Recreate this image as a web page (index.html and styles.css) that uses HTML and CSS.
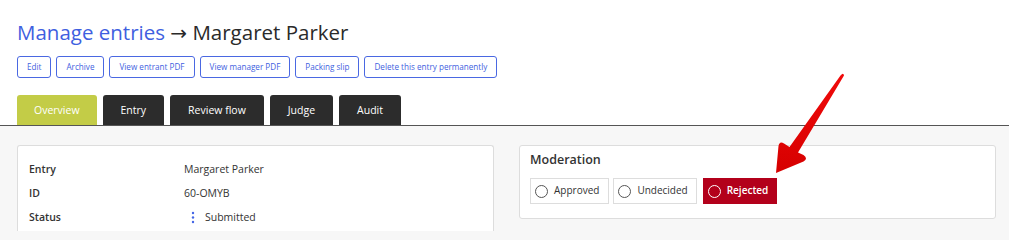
FILE: index.html
```html
<!DOCTYPE html>
<html>
<head>
<meta charset="utf-8">
<link rel="stylesheet" href="styles.css">
</head>
<body>
<div class="top">
  <h1 class="title"><span class="crumb">Manage entries</span> <span class="sep">→</span> Margaret Parker</h1>
  <div class="actions">
    <a class="btn">Edit</a>
    <a class="btn">Archive</a>
    <a class="btn">View entrant PDF</a>
    <a class="btn">View manager PDF</a>
    <a class="btn">Packing slip</a>
    <a class="btn">Delete this entry permanently</a>
  </div>
  <div class="tabs">
    <div class="tab active">Overview</div>
    <div class="tab">Entry</div>
    <div class="tab">Review flow</div>
    <div class="tab">Judge</div>
    <div class="tab">Audit</div>
  </div>
</div>
<div class="content">
  <div class="card info">
    <div class="row"><div class="label">Entry</div><div class="value">Margaret Parker</div></div>
    <div class="row"><div class="label">ID</div><div class="value">60-OMYB</div></div>
    <div class="row"><div class="label">Status</div><div class="value status"><svg class="dots" width="4" height="13" viewBox="0 0 4 13"><circle cx="2" cy="2" r="1.2"/><circle cx="2" cy="6.5" r="1.2"/><circle cx="2" cy="11" r="1.2"/></svg><span>Submitted</span></div></div>
  </div>
  <div class="card moderation">
    <div class="mod-title">Moderation</div>
    <div class="options">
      <div class="opt first"><span class="radio"></span><span class="opt-text">Approved</span></div>
      <div class="opt"><span class="radio"></span><span class="opt-text">Undecided</span></div>
      <div class="opt selected"><span class="radio"></span><span class="opt-text">Rejected</span></div>
    </div>
  </div>
</div>
<svg class="annot" width="1009" height="231" viewBox="0 0 1009 231">
  <defs>
    <linearGradient id="rg" x1="0" y1="0" x2="0" y2="1">
      <stop offset="0" stop-color="#f00a0a"/>
      <stop offset="1" stop-color="#d60000"/>
    </linearGradient>
  </defs>
  <path d="M776,173 L778.5,146 Q779.5,140.5 784,143.5 L789.5,147 L840.5,75.5 Q843.5,72 844,75.5 L798,152.5 L803.5,155 Q808.5,158.5 803.5,161.5 Z" fill="url(#rg)"/>
</svg>
</body>
</html>
```

FILE: styles.css
```css
html, body {
  margin: 0;
  padding: 0;
  overflow: hidden;
}
body {
  font-family: "Open Sans", "Liberation Sans", sans-serif;
  color: #333;
  background: #f7f7f7;
  width: 1009px;
  height: 231px;
  position: relative;
}
.top {
  background: #fff;
  padding: 19px 0 0 17px;
  border-bottom: 1px solid #555;
}
.title {
  margin: 0;
  font-size: 20.5px;
  line-height: 26px;
  font-weight: 400;
  color: #2a2a2a;
}
.crumb {
  color: #3f5fe0;
}
.sep {
  font-family: "DejaVu Sans", sans-serif;
  font-size: 20px;
}
.actions {
  display: flex;
  gap: 5px;
  margin-top: 10px;
}
.btn {
  display: block;
  height: 20px;
  line-height: 20px;
  padding: 0 9px;
  border: 1px solid #4a68e2;
  border-radius: 3px;
  color: #3f5fe0;
  font-size: 8.15px;
}
.tabs {
  display: flex;
  gap: 6px;
  margin-top: 17px;
}
.tab {
  height: 30px;
  line-height: 30px;
  padding: 0 18px;
  background: #2c2c2c;
  color: #fff;
  font-size: 10.5px;
  border-radius: 3px 3px 0 0;
}
.tab.active {
  background: #c3cc47;
  padding: 0 17px;
}
.content {
  display: flex;
  gap: 25px;
  padding: 19px 0 0 17px;
}
.card {
  background: #fff;
  border: 1px solid #ddd;
  border-radius: 3px;
  box-sizing: border-box;
  width: 477px;
}
.info {
  padding: 11px 11px 0;
  height: 86px;
  border-bottom: 0;
  border-radius: 3px 3px 0 0;
}
.row {
  display: flex;
  height: 24px;
  line-height: 24px;
  font-size: 10.5px;
}
.label {
  width: 155px;
  font-weight: 600;
  color: #333;
}
.value {
  color: #333;
}
.status {
  display: flex;
  align-items: center;
  padding-left: 7px;
}
.dots {
  fill: #4466e6;
  margin-right: 10px;
}
.moderation {
  padding: 7px 10px 14px;
  height: 74px;
}
.mod-title {
  font-size: 12.5px;
  font-weight: 600;
  line-height: 14px;
  color: #333;
  margin-bottom: 11px;
}
.options {
  display: flex;
}
.opt {
  display: flex;
  align-items: center;
  box-sizing: border-box;
  height: 26px;
  padding: 0 8px 0 4px;
  border: 1px solid #ddd;
  font-size: 10px;
  color: #333;
  margin-right: 3px;
}
.opt.first {
  margin-right: 4px;
  padding-right: 9px;
}
.opt.selected {
  background: #b3001b;
  border-color: #b3001b;
  color: #fff;
  font-weight: 600;
  margin-left: 3px;
}
.radio {
  width: 11px;
  height: 11px;
  border: 1px solid #555;
  border-radius: 50%;
  margin-right: 6px;
  margin-top: 1px;
}
.selected .radio {
  border-color: #fff;
}
.opt-text {
  padding-bottom: 3px;
}
.annot {
  position: absolute;
  left: 0;
  top: 0;
  pointer-events: none;
}
```
